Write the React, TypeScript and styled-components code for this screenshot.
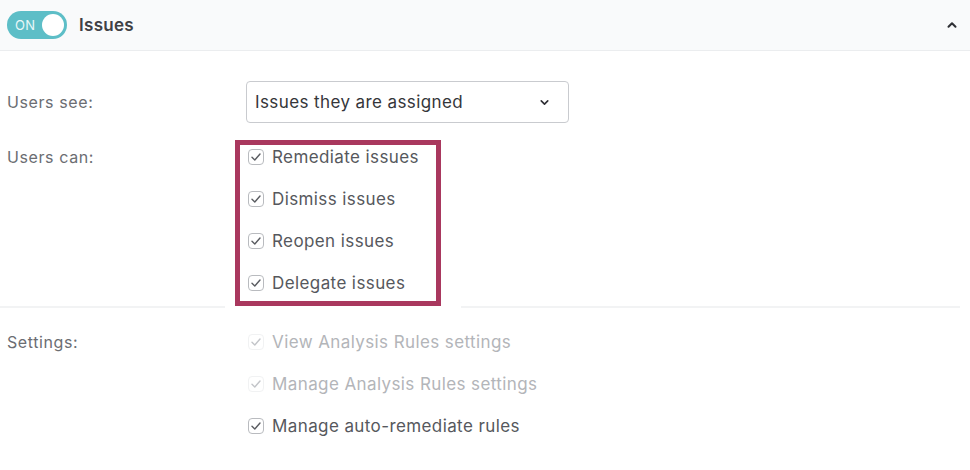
import React from "react";
import styled, { createGlobalStyle, css } from "styled-components";
import { ChevronDown, ChevronUp } from "lucide-react";

const GlobalStyle = createGlobalStyle`
  html, body {
    margin: 0;
    padding: 0;
    background: #ffffff;
  }
  body {
    font-family: Inter, "Noto Sans", "Liberation Sans", sans-serif;
  }
`;

const Page = styled.div`
  width: 970px;
  height: 470px;
  overflow: hidden;
  background: #fff;
`;

const Header = styled.div`
  height: 50px;
  display: flex;
  align-items: center;
  padding: 0 8px 0 7px;
  background: #f9fafb;
  border-bottom: 1px solid #ebedef;
`;

const Toggle = styled.div`
  width: 60px;
  height: 28px;
  border-radius: 14px;
  background: #5dbec7;
  display: flex;
  align-items: center;
  justify-content: space-between;
  padding: 0 3px 0 8px;
  box-sizing: border-box;
  font-size: 13px;
  color: #e9f7f8;
  letter-spacing: 0.3px;
`;

const Knob = styled.span`
  width: 22px;
  height: 22px;
  border-radius: 50%;
  background: #fff;
`;

const Title = styled.div`
  margin-left: 12px;
  font-size: 17px;
  font-weight: 600;
  letter-spacing: 0.3px;
  color: #3f4045;
  flex: 1;
`;

const Collapse = styled.div`
  width: 20px;
  display: flex;
  justify-content: center;
  color: #2f3035;
`;

const Section = styled.div<{ $top: number }>`
  display: grid;
  grid-template-columns: 239px 1fr;
  row-gap: 17px;
  padding: ${({ $top }) => $top}px 0 0 7px;
`;

const Label = styled.div<{ $offset?: number }>`
  font-size: 16px;
  letter-spacing: 0.6px;
  color: #6b6d72;
  line-height: 24px;
  margin-top: ${({ $offset }) => $offset ?? 0}px;
`;

const Select = styled.div`
  width: 323px;
  height: 42px;
  box-sizing: border-box;
  border: 1px solid #c9cbcf;
  border-radius: 4px;
  display: flex;
  align-items: center;
  justify-content: space-between;
  padding: 0 17px 0 8px;
  font-size: 17px;
  letter-spacing: 0.4px;
  color: #35363a;
  background: #fff;
`;

const List = styled.div`
  display: flex;
  flex-direction: column;
  gap: 18px;
`;

const Options = styled(List)`
  padding-left: 2px;
`;

const Frame = styled(List)`
  position: relative;
  z-index: 1;
  width: 206px;
  margin-left: -11px;
  box-sizing: border-box;
  border: 5px solid #a9385e;
  padding: 0 0 6px 8px;
  background: #fff;
  box-shadow: 0 0 0 10px #fff, 10px 0 0 10px #fff;
`;

const Row = styled.label<{ $disabled?: boolean }>`
  display: flex;
  align-items: center;
  height: 24px;
  gap: 8px;
  font-size: 17px;
  letter-spacing: 0.4px;
  white-space: nowrap;
  color: ${({ $disabled }) => ($disabled ? "#b3b5b9" : "#56585d")};
`;

const Box = styled.span<{ $disabled?: boolean }>`
  flex-shrink: 0;
  width: 16px;
  height: 16px;
  box-sizing: border-box;
  border-radius: 4px;
  display: flex;
  align-items: center;
  justify-content: center;
  ${({ $disabled }) =>
    $disabled
      ? css`
          border: 1px solid #f1f2f3;
          color: #c3c5c9;
        `
      : css`
          border: 1.5px solid #b9bbbf;
          color: #5a5c61;
        `}
`;

const Divider = styled.div`
  height: 2px;
  background: #f2f3f4;
  width: 960px;
`;

function Check({ label, disabled }: { label: string; disabled?: boolean }) {
  return (
    <Row $disabled={disabled}>
      <Box $disabled={disabled}>
        <svg width="12" height="12" viewBox="0 0 12 12" fill="none">
          <polyline
            points="2,6.3 4.8,9 10,3"
            stroke="currentColor"
            strokeWidth="1.4"
            strokeLinecap="round"
            strokeLinejoin="round"
          />
        </svg>
      </Box>
      {label}
    </Row>
  );
}

export default function App() {
  return (
    <Page>
      <GlobalStyle />
      <Header>
        <Toggle>
          ON
          <Knob />
        </Toggle>
        <Title>Issues</Title>
        <Collapse>
          <ChevronUp size={14} strokeWidth={3.5} />
        </Collapse>
      </Header>

      <Section $top={30}>
        <Label $offset={9}>Users see:</Label>
        <Select>
          Issues they are assigned
          <ChevronDown size={13} strokeWidth={3} color="#2f3035" />
        </Select>

        <Label $offset={5}>Users can:</Label>
        <Frame>
          <Check label="Remediate issues" />
          <Check label="Dismiss issues" />
          <Check label="Reopen issues" />
          <Check label="Delegate issues" />
        </Frame>
      </Section>

      <Divider />

      <Section $top={22}>
        <Label>Settings:</Label>
        <Options>
          <Check label="View Analysis Rules settings" disabled />
          <Check label="Manage Analysis Rules settings" disabled />
          <Check label="Manage auto-remediate rules" />
        </Options>
      </Section>
    </Page>
  );
}
